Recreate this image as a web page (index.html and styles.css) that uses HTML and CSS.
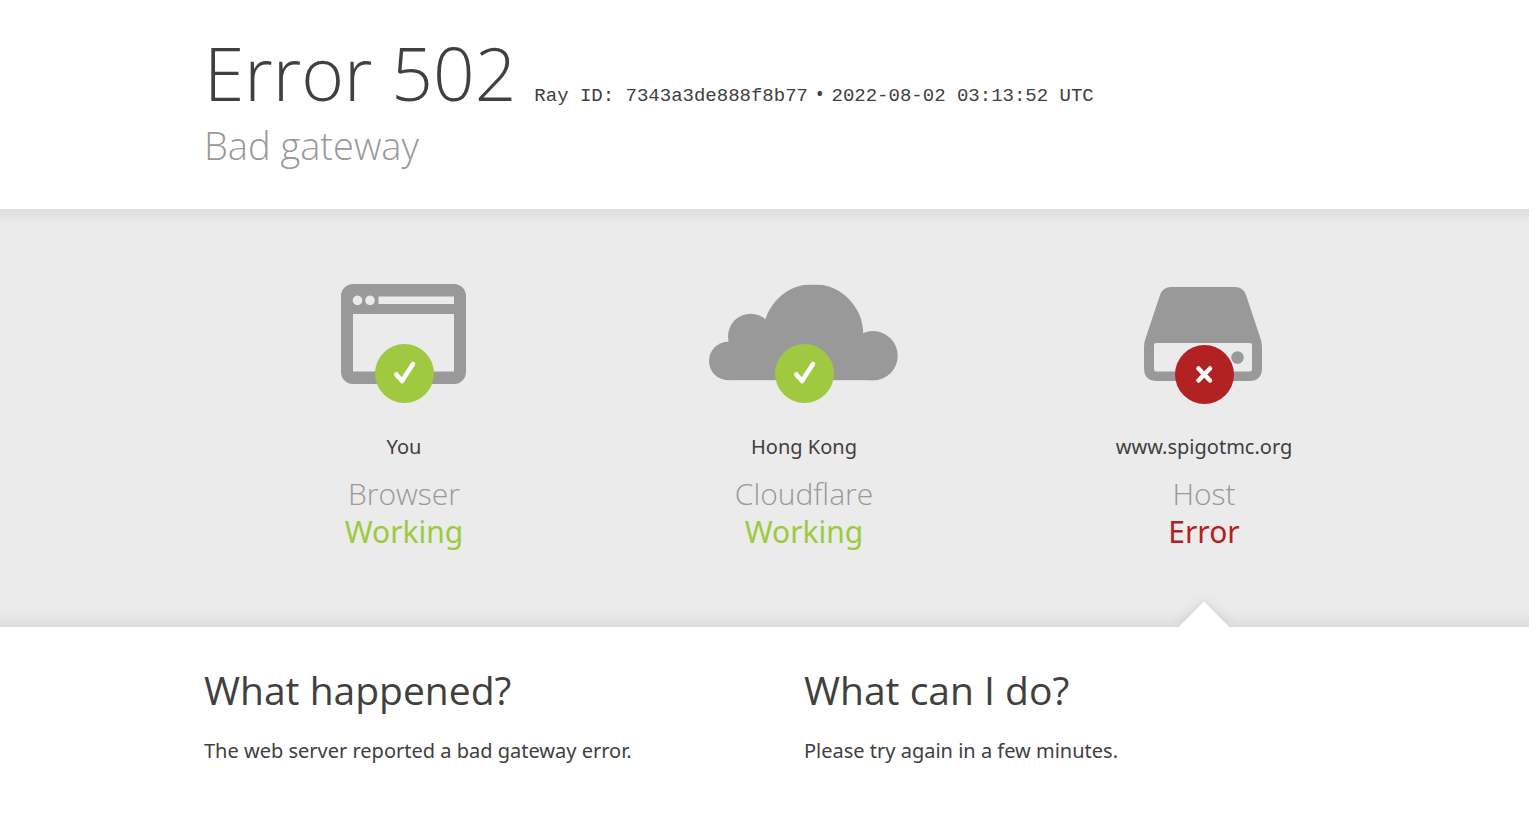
FILE: index.html
```html
<!DOCTYPE html>
<html lang="en">
<head>
<meta charset="utf-8">
<meta name="viewport" content="width=device-width, initial-scale=1">
<title>502: Bad gateway</title>
<link rel="stylesheet" href="styles.css">
</head>
<body>
<header class="wrap header">
  <h1 class="title">
    <span class="code">Error 502</span>
    <span class="ray">Ray ID: 7343a3de888f8b77</span>
    <span class="dot">•</span>
    <span class="ray">2022-08-02 03:13:52 UTC</span>
  </h1>
  <h2 class="subtitle">Bad gateway</h2>
</header>
<section class="status">
  <div class="wrap columns">
    <div class="node">
      <svg class="icon" viewBox="0 0 200 124" aria-hidden="true">
        <path fill="#999" fill-rule="evenodd" d="M49 4h101a12 12 0 0 1 12 12v76a12 12 0 0 1-12 12H49a12 12 0 0 1-12-12V16A12 12 0 0 1 49 4ZM49 34v57.500h101V34ZM74.500 16.500v7.500h75.500v-7.500ZM53.500 15.500a4.800 4.800 0 1 0 .01 0ZM66 15.500a4.800 4.800 0 1 0 .01 0Z"/>
        <circle cx="100.500" cy="93.500" r="29.500" fill="#a0c840"/>
        <path d="m92.300 94.500 5.700 6.500 11-17" fill="none" stroke="#fff" stroke-width="4.500" stroke-linecap="round" stroke-linejoin="round"/>
      </svg>
      <span class="place">You</span>
      <h3 class="role">Browser</h3>
      <span class="state ok">Working</span>
    </div>
    <div class="node">
      <svg class="icon" viewBox="0 0 200 124" aria-hidden="true">
        <clipPath id="cloud-top"><rect y="4.700" width="200" height="96"/></clipPath>
        <g fill="#999" clip-path="url(#cloud-top)">
          <circle cx="24.300" cy="81" r="19.300"/>
          <circle cx="46.700" cy="56.400" r="22.700"/>
          <circle cx="109.200" cy="54" r="50"/>
          <circle cx="169" cy="75.700" r="24.700"/>
          <path d="M24.300 62H169v38.300H24.300Z"/>
        </g>
        <circle cx="100.500" cy="93.500" r="29.500" fill="#a0c840"/>
        <path d="m92.300 94.500 5.700 6.500 11-17" fill="none" stroke="#fff" stroke-width="4.500" stroke-linecap="round" stroke-linejoin="round"/>
      </svg>
      <span class="place">Hong Kong</span>
      <h3 class="role">Cloudflare</h3>
      <span class="state ok">Working</span>
    </div>
    <div class="node failed">
      <svg class="icon" viewBox="0 0 200 124" aria-hidden="true">
        <path fill="#999" fill-rule="evenodd" d="M67 7h64q8 0 11 8l14 42q2 5 2 10v21q0 13-13 13H53q-13 0-13-13V67q0-5 2-10l14-42q3-8 11-8ZM52 63q-2 0-2 2v24q0 2.500 2 2.500h94q2 0 2-2.500V65q0-2-2-2Z"/>
        <circle cx="133.500" cy="77.500" r="6.300" fill="#999"/>
        <circle cx="100.500" cy="94.500" r="29.500" fill="#b22222"/>
        <path d="m94.500 88.500 11.500 12m0-12-11.500 12" fill="none" stroke="#fff" stroke-width="4.500" stroke-linecap="round"/>
      </svg>
      <span class="place">www.spigotmc.org</span>
      <h3 class="role">Host</h3>
      <span class="state bad">Error</span>
    </div>
  </div>
</section>
<main class="wrap details">
  <section>
    <h2 class="question">What happened?</h2>
    <p class="answer">The web server reported a bad gateway error.</p>
  </section>
  <section>
    <h2 class="question">What can I do?</h2>
    <p class="answer">Please try again in a few minutes.</p>
  </section>
</main>
</body>
</html>
```
FILE: styles.css
```css
* { box-sizing: border-box; }
body {
  margin: 0;
  background: #fff;
  color: #404040;
  font: 20px/30px "Noto Sans", "Open Sans", sans-serif;
}
h1, h2, h3, p { margin: 0; font-weight: 400; }
.wrap {
  max-width: 1279px;
  margin: 0 auto;
  padding-left: 79px;
}
.header { padding-top: 23px; padding-bottom: 42px; }
.title {
  display: flex;
  flex-wrap: wrap;
  align-items: baseline;
  font-size: 20px;
}
.code, .subtitle, .role, .question { font-family: "Open Sans", sans-serif; }
.code {
  margin-right: 18px;
  font-weight: 300;
  font-size: 73px;
  line-height: 100px;
}
.ray { font: 19px/30px "Liberation Mono", monospace; }
.dot { padding: 0 8px; }
.subtitle {
  color: #999;
  font-weight: 300;
  font-size: 38px;
  line-height: 44px;
}
.status {
  background: linear-gradient(#dedede, #ebebeb00 16px), linear-gradient(#ebebeb00 calc(100% - 16px), #dedede), #ebebeb;
}
.columns {
  display: grid;
  grid-template-columns: repeat(3, 1fr);
}
.node {
  position: relative;
  display: flex;
  flex-direction: column;
  align-items: center;
  padding: 71px 0 76px;
  overflow: hidden;
}
.failed::after {
  content: "";
  position: absolute;
  bottom: -18px;
  width: 36px;
  height: 36px;
  background: #fff;
  box-shadow: 0 0 12px #ccc;
  transform: rotate(45deg);
}
.icon { width: 200px; height: 124px; }
.place { margin-top: 28px; }
.role {
  margin-top: 13px;
  color: #999;
  font-weight: 300;
  font-size: 30px;
  line-height: 38px;
}
.state { font-size: 30px; line-height: 38px; }
.ok { color: #9bca3e; }
.bad { color: #b22222; }
.details {
  display: grid;
  grid-template-columns: 1fr 1fr;
  padding-top: 38px;
  padding-bottom: 40px;
}
.question { font-size: 39px; line-height: 50px; }
.answer { margin-top: 21px; }
```
